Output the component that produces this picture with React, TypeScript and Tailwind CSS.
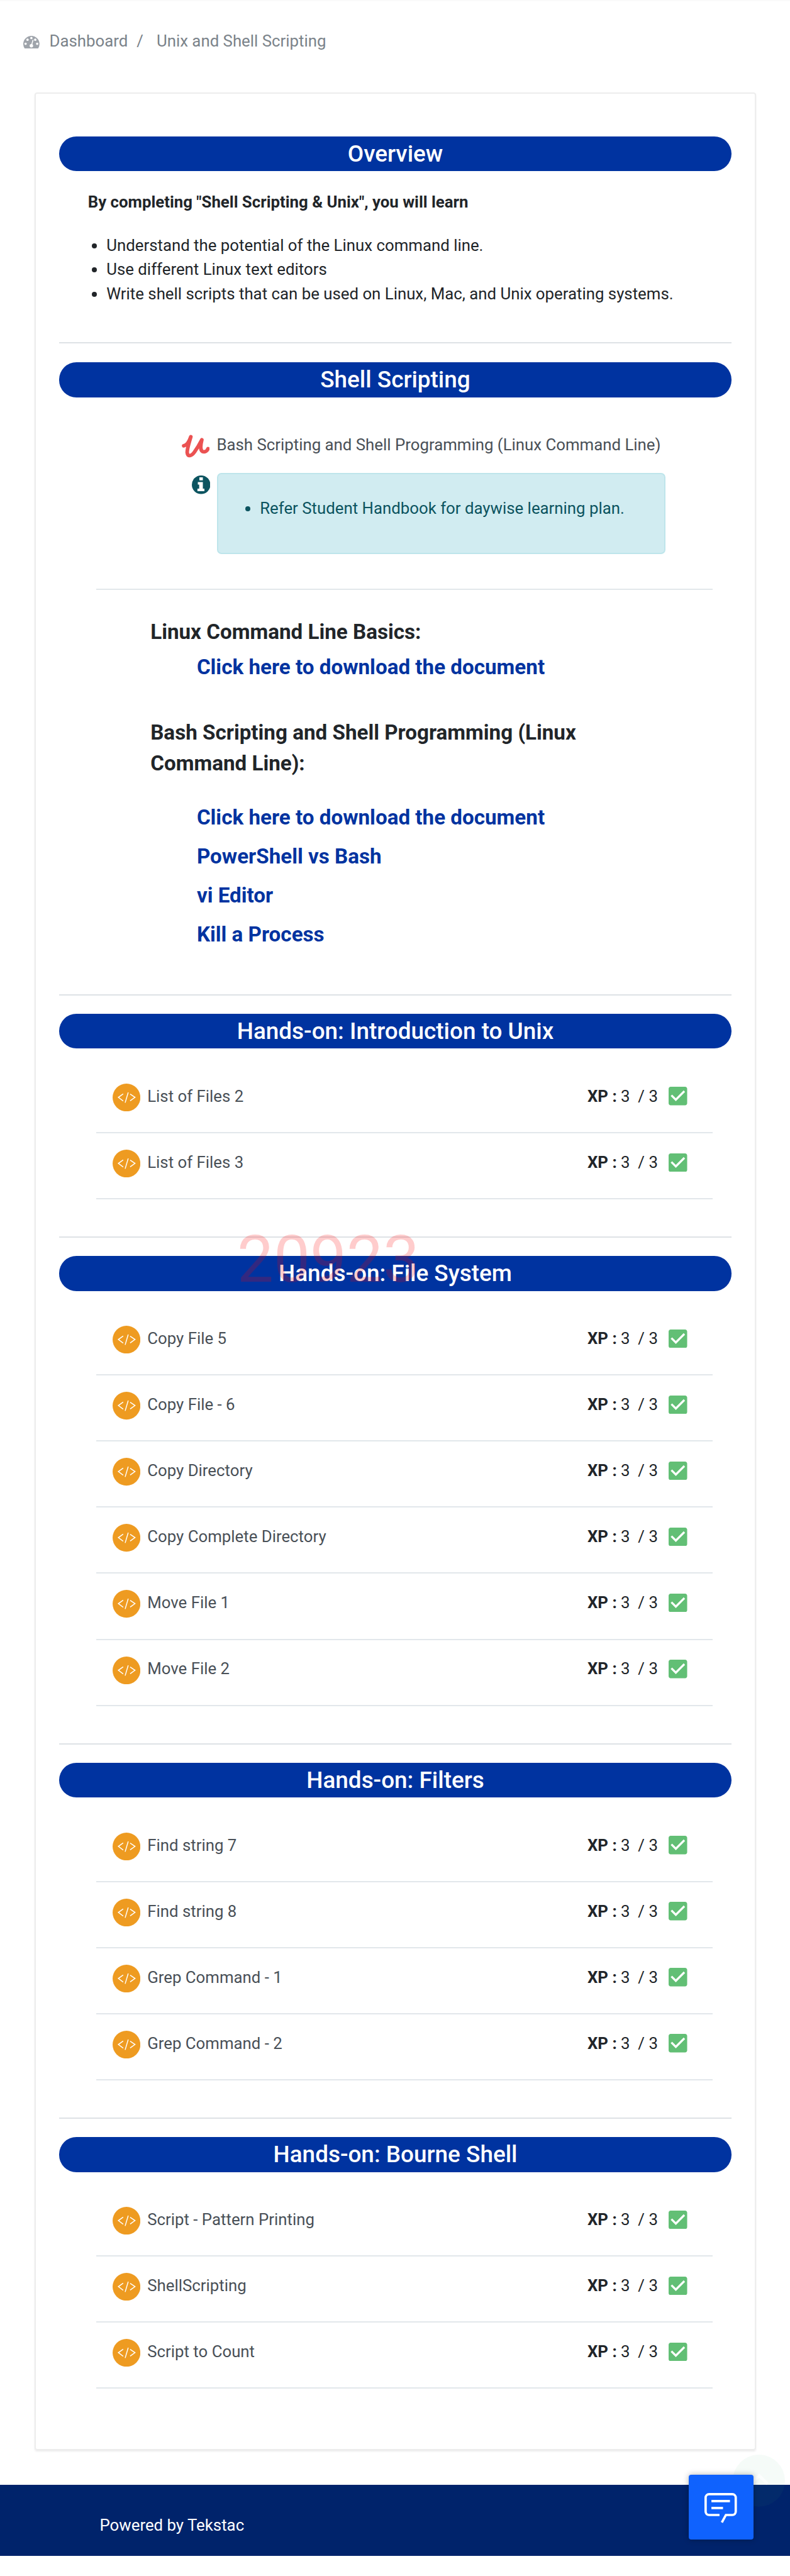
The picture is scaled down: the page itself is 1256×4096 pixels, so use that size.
import React from "react";

const sections: { title: string; tasks: string[] }[] = [
  { title: "Hands-on: Introduction to Unix", tasks: ["List of Files 2", "List of Files 3"] },
  {
    title: "Hands-on: File System",
    tasks: ["Copy File 5", "Copy File - 6", "Copy Directory", "Copy Complete Directory", "Move File 1", "Move File 2"],
  },
  { title: "Hands-on: Filters", tasks: ["Find string 7", "Find string 8", "Grep Command - 1", "Grep Command - 2"] },
  { title: "Hands-on: Bourne Shell", tasks: ["Script - Pattern Printing", "ShellScripting", "Script to Count"] },
];

function Bar({ children }: { children: React.ReactNode }) {
  return (
    <h2 className="h-[55.3px] rounded-[27.6px] bg-[#0033a0] text-center text-[36.9px] leading-[55.3px] font-medium text-white">
      {children}
    </h2>
  );
}

function GaugeIcon() {
  return (
    <svg viewBox="0 0 84 65" className="mt-[11px] h-[20px] w-[25.8px]">
      <path d="M7 65A42 42 0 1 1 77 65Z" fill="#9fa4ab" />
      <g fill="#fff">
        <circle cx="22" cy="20" r="6" />
        <circle cx="42" cy="11" r="6" />
        <circle cx="62" cy="20" r="6" />
        <circle cx="12" cy="41" r="6" />
        <circle cx="72" cy="41" r="6" />
        <circle cx="42" cy="51" r="9" />
      </g>
      <path d="M43 48 50 23" stroke="#fff" strokeWidth="5" strokeLinecap="round" />
    </svg>
  );
}

function UdemyIcon() {
  return (
    <svg viewBox="42 42 144 120" className="mt-[3.5px] h-[36.9px] w-[44.2px]">
      <path
        d="M52 100C66 98 80 78 89 53C80 85 70 112 70 135C72 158 92 155 108 132C125 108 138 85 146 69C138 100 138 125 150 130C162 134 174 126 178 115"
        fill="none"
        stroke="#eb5252"
        strokeWidth="19"
        strokeLinecap="round"
        strokeLinejoin="round"
      />
    </svg>
  );
}

function InfoIcon() {
  return (
    <svg viewBox="0 0 96 96" className="mt-[4.5px] ml-[15.5px] size-[29.5px]">
      <circle cx="48" cy="48" r="48" fill="#0c5460" />
      <path d="M39 10h18v15H39zM31 34h26v34h8v13H29V68h9V47h-7z" fill="#fff" />
    </svg>
  );
}

function CodeIcon() {
  return (
    <svg viewBox="0 0 48 48" className="size-[44.2px] shrink-0">
      <circle cx="24" cy="24" r="24" fill="#ee9b21" />
      <path d="M18.300 17.700 10 23.700l8.300 6.300M30.300 18l8.400 5.700-8.400 6M27 15.300 21.700 33" fill="none" stroke="#fff" strokeWidth="1.6" />
    </svg>
  );
}

function CheckIcon() {
  return (
    <svg viewBox="3 3 18 18" className="mt-[5.5px] ml-[17.4px] size-[29.5px]">
      <path
        fill="#62bf75"
        d="M19 3H5c-1.11 0-2 .9-2 2v14c0 1.1.89 2 2 2h14c1.11 0 2-.9 2-2V5c0-1.1-.89-2-2-2zm-9 14l-5-5 1.41-1.41L10 14.17l7.59-7.59L19 8l-9 9z"
      />
    </svg>
  );
}

function TaskRow({ name }: { name: string }) {
  return (
    <li className="flex h-[105.06px] items-start border-b-2 border-[#e2e7eb] pt-[26px] pr-[40.5px] pl-[25.8px]">
      <CodeIcon />
      <span className="ml-[11px] pt-[0.8px] text-[#495057]">{name}</span>
      <span className="ml-auto pt-[0.8px] whitespace-pre">
        <b>XP : </b>3  / 3
      </span>
      <CheckIcon />
    </li>
  );
}

function DocLink({ children }: { children: string }) {
  return <a className="block text-[33.2px] leading-[62px] font-bold text-[#0033a0]">{children}</a>;
}

export default function App() {
  return (
    <div className="relative h-[4096px] w-[1256px] overflow-hidden bg-white font-[Roboto,sans-serif] text-[25.8px] leading-[38.7px] text-[#212529]">
      <nav className="flex h-[147px] items-start border-t-2 border-[#fafafa] pt-[44px] pl-[37px] text-[#7b838a]">
        <GaugeIcon />
        <span className="ml-[15.7px]">Dashboard</span>
        <span className="ml-[14px]">/</span>
        <span className="ml-[21px]">Unix and Shell Scripting</span>
      </nav>

      <main className="mx-[55.3px] h-[3749px] w-[1146.4px] rounded-[4px] border-2 border-[#ededed] px-[36.9px] pt-[68px] shadow-[0_2px_3px_rgba(0,0,0,0.08)]">
        <section className="h-[327.3px]">
          <Bar>Overview</Bar>
          <p className="mt-[30px] ml-[45.5px] font-bold">By completing "Shell Scripting &amp; Unix", you will learn</p>
          <ul className="mt-[29.5px] ml-[75px] list-disc">
            <li>Understand the potential of the Linux command line.</li>
            <li>Use different Linux text editors</li>
            <li>Write shell scripts that can be used on Linux, Mac, and Unix operating systems.</li>
          </ul>
        </section>

        <section className="h-[1036.5px] border-t-2 border-[#dee2e6] pt-[30px]">
          <Bar>Shell Scripting</Bar>
          <div className="mr-[29.5px] ml-[59px] h-[306px] border-b-2 border-[#e2e7eb] pt-[56px] pl-[136px]">
            <div className="flex h-[41px]">
              <UdemyIcon />
              <span className="ml-[11px] text-[#495057]">Bash Scripting and Shell Programming (Linux Command Line)</span>
            </div>
            <div className="mt-[23px] flex">
              <InfoIcon />
              <div className="ml-[10.5px] h-[129px] w-[713.2px] rounded-[7px] border-2 border-[#bee5eb] bg-[#d1ecf1] pt-[35px] pl-[66.5px] text-[#0c5460]">
                <ul className="list-disc">
                  <li>Refer Student Handbook for daywise learning plan.</li>
                </ul>
              </div>
            </div>
          </div>
          <div className="w-[860px] pt-[42px] pl-[145px]">
            <h3 className="text-[33.2px] leading-[49.8px] font-bold">Linux Command Line Basics:</h3>
            <div className="mt-[1px] ml-[73.7px]">
              <DocLink>Click here to download the document</DocLink>
            </div>
            <h3 className="mt-[47.3px] text-[33.2px] leading-[49.8px] font-bold">
              Bash Scripting and Shell Programming (Linux Command Line):
            </h3>
            <div className="mt-[29.3px] ml-[73.7px]">
              <DocLink>Click here to download the document</DocLink>
              <DocLink>PowerShell vs Bash</DocLink>
              <DocLink>vi Editor</DocLink>
              <DocLink>Kill a Process</DocLink>
            </div>
          </div>
        </section>

        {sections.map((s) => (
          <section key={s.title} className="border-t-2 border-[#dee2e6] pt-[29.4px] pb-[59px]">
            <Bar>{s.title}</Bar>
            <ul className="mr-[29.5px] ml-[59px] pt-[29.5px]">
              {s.tasks.map((t) => (
                <TaskRow key={t} name={t} />
              ))}
            </ul>
          </section>
        ))}
      </main>

      <footer className="mt-[55px] h-[113px] bg-[#00236b] pt-[45px] pl-[158.5px] text-white">Powered by Tekstac</footer>

      <div className="absolute top-[1942px] left-[377px] text-[103.2px] leading-[121px] text-[rgba(255,0,0,0.2)]">20923</div>

      <div className="absolute top-[3903px] left-[1165px] flex size-[83px] justify-center rounded-full bg-[rgba(50,180,110,0.05)] pt-[29px]">
        <svg viewBox="0 0 32 20" className="h-[20px] w-[30px]">
          <path d="M2 18 16 4l14 14" fill="none" stroke="#fff" strokeOpacity="0.7" strokeWidth="5" />
        </svg>
      </div>
      <button className="absolute top-[3934.5px] left-[1094.7px] flex size-[103.2px] items-start justify-center rounded-[4px] bg-[#0f62fe] pt-[29.5px] shadow-[0_0_10px_rgba(0,0,0,0.3)]">
        <svg viewBox="0 0 56 52" className="h-[47.9px] w-[51.6px]" fill="none" stroke="#fff" strokeWidth="4">
          <path d="M26 38H8a6 6 0 0 1-6-6V8a6 6 0 0 1 6-6h40a6 6 0 0 1 6 6v24a6 6 0 0 1-6 6H37l-7 13" />
          <path d="M12 14h32M12 26h20" />
        </svg>
      </button>
    </div>
  );
}
